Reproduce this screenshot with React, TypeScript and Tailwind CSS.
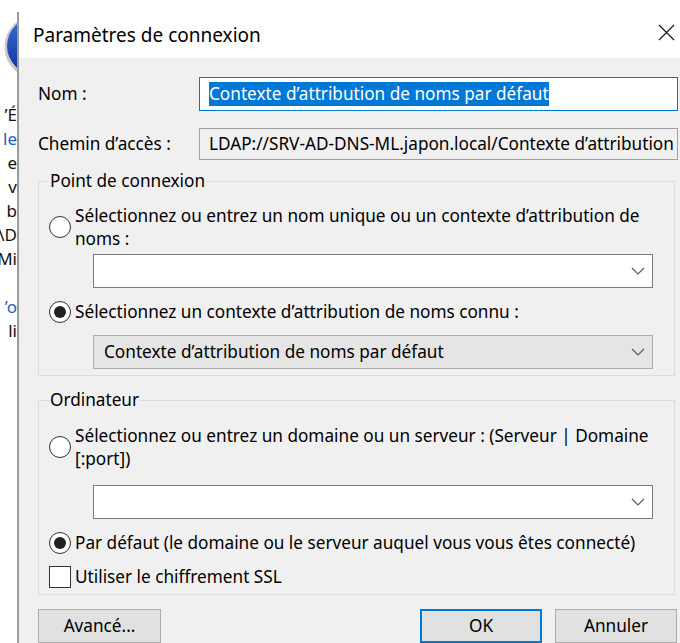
import React from 'react'

const Chevron = () => (
  <svg width="14" height="8" viewBox="0 0 14 8" className="shrink-0">
    <path d="M1 1l6 6 6-6" fill="none" stroke="#5c5c5c" strokeWidth="1.2" />
  </svg>
)

const Radio = ({ checked }: { checked?: boolean }) => (
  <span className="w-[22px] h-[22px] rounded-full border border-[#333] bg-white flex items-center justify-center shrink-0">
    {checked && <span className="w-[12px] h-[12px] rounded-full bg-[#222]" />}
  </span>
)

const Combo = ({ value, readOnly, className }: { value?: string; readOnly?: boolean; className?: string }) => (
  <div
    className={`ml-[44px] w-[560px] h-[34px] border flex items-center justify-between pl-[10px] pr-[7px] ${
      readOnly ? 'bg-[#e5e5e5] border-[#adadad]' : 'bg-white border-[#7a7a7a]'
    } ${className ?? ''}`}
  >
    <span>{value}</span>
    <Chevron />
  </div>
)

// strip of the window sitting behind the dialog
const BackWindow = () => (
  <div className="w-[17px] shrink-0 bg-white overflow-hidden flex flex-col items-end">
    <svg width="17" height="80" viewBox="0 0 17 80" className="mt-[8px] shrink-0">
      <defs>
        <linearGradient id="orb" x1="0" y1="0" x2="0" y2="1">
          <stop offset="0" stopColor="#3b6fe0" />
          <stop offset="1" stopColor="#102f96" />
        </linearGradient>
      </defs>
      <circle cx="36" cy="39" r="30" fill="none" stroke="#c8c8c8" strokeWidth="3" />
      <circle cx="36" cy="38" r="29" fill="url(#orb)" />
    </svg>
    <div className="mt-[15px] text-[17px] leading-[24px] whitespace-nowrap flex flex-col items-end">
      <span className="text-[#111]">’É</span>
      <span className="text-[#1a5fc8]">le</span>
      <span className="text-[#111]">e</span>
      <span className="text-[#111]">v</span>
      <span className="text-[#111]">b</span>
      <span className="text-[#111]">\D</span>
      <span className="text-[#111]">Mi</span>
      <span>&nbsp;</span>
      <span className="text-[#1a5fc8]">’o</span>
      <span className="text-[#111]">li</span>
    </div>
  </div>
)

export default function App() {
  return (
    <div className="w-[680px] h-[643px] overflow-hidden bg-white flex font-['Noto_Sans',sans-serif] text-[17.2px] text-black">
      <BackWindow />
      <div className="mt-[12px] w-[663px] shrink-0 border-l-2 border-[#9a9a9a] flex flex-col">
        {/* title bar */}
        <div className="h-[46px] bg-white flex items-center justify-between pl-[14px] pr-[5px]">
          <span className="text-[19px]">Paramètres de connexion</span>
          <svg width="17" height="17" viewBox="0 0 17 17" className="mb-[5px]">
            <path d="M1 1l15 15M16 1L1 16" stroke="#111" strokeWidth="1.1" />
          </svg>
        </div>

        {/* body */}
        <div className="flex-1 bg-[#f0f0f0] pl-[19px] flex flex-col">
          <div className="mt-[19px] flex items-center">
            <span className="w-[161px]">Nom :</span>
            <div className="w-[479px] h-[34px] border border-[#0078d7] bg-white flex items-center pl-[9px]">
              <span className="bg-[#0078d7] text-white leading-[24px] whitespace-nowrap">Contexte d’attribution de noms par défaut</span>
            </div>
          </div>

          <div className="mt-[17px] flex items-center">
            <span className="w-[161px]">Chemin d’accès :</span>
            <div className="w-[479px] h-[32px] border border-[#a0a0a0] bg-[#f0f0f0] flex items-center pl-[9px] overflow-hidden whitespace-nowrap">
              LDAP://SRV-AD-DNS-ML.japon.local/Contexte d’attribution
            </div>
          </div>

          <fieldset className="mt-[9px] w-[637px] border border-[#dcdcdc] pl-[10px] pr-[10px] pt-[11px] pb-[6px]">
            <legend className="px-[1px] leading-[24px]">Point de connexion</legend>
            <label className="flex items-center gap-[4px] leading-[23px]">
              <Radio />
              <span className="whitespace-nowrap">
                Sélectionnez ou entrez un nom unique ou un contexte d’attribution de
                <br />
                noms :
              </span>
            </label>
            <Combo className="mt-[4px]" />
            <label className="mt-[12px] flex items-center gap-[4px] leading-[23px]">
              <Radio checked />
              <span>Sélectionnez un contexte d’attribution de noms connu :</span>
            </label>
            <Combo className="mt-[12px]" readOnly value="Contexte d’attribution de noms par défaut" />
          </fieldset>

          <fieldset className="mt-[12px] w-[637px] border border-[#dcdcdc] pl-[10px] pr-[10px] pt-[12px] pb-[6px]">
            <legend className="px-[1px] leading-[24px]">Ordinateur</legend>
            <label className="flex items-center gap-[4px] leading-[23px]">
              <Radio />
              <span className="whitespace-nowrap">
                Sélectionnez ou entrez un domaine ou un serveur : (Serveur | Domaine
                <br />
                [:port])
              </span>
            </label>
            <Combo className="mt-[15px] h-[33px]" />
            <label className="mt-[12px] flex items-center gap-[4px] leading-[23px]">
              <Radio checked />
              <span>Par défaut (le domaine ou le serveur auquel vous vous êtes connecté)</span>
            </label>
            <label className="mt-[11px] flex items-center gap-[4px] leading-[23px]">
              <span className="w-[22px] h-[22px] border border-[#333] bg-white shrink-0" />
              <span>Utiliser le chiffrement SSL</span>
            </label>
          </fieldset>

          <div className="mt-[14px] w-[639px] flex">
            <button className="w-[123px] h-[34px] border border-[#adadad] bg-[#e1e1e1]">Avancé...</button>
            <button className="ml-auto w-[122px] h-[34px] border-2 border-[#0078d7] bg-[#e1e1e1]">OK</button>
            <button className="ml-[13px] w-[122px] h-[34px] border border-[#adadad] bg-[#e1e1e1]">Annuler</button>
          </div>
        </div>
      </div>
    </div>
  )
}
